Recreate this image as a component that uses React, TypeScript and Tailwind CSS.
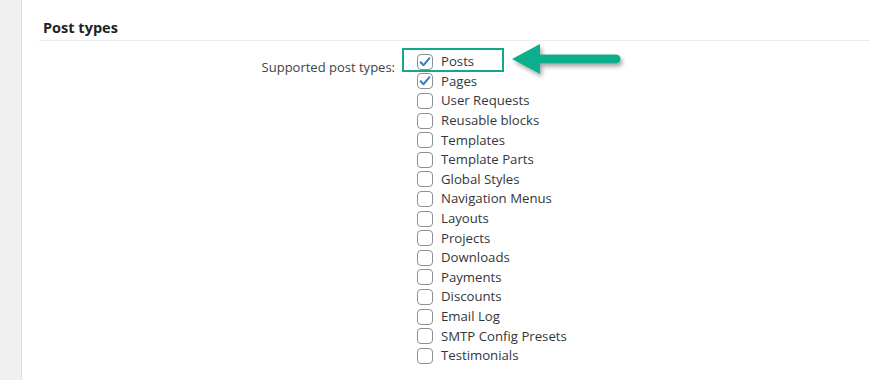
import React from "react";

const items: { label: string; checked: boolean }[] = [
  { label: "Posts", checked: true },
  { label: "Pages", checked: true },
  { label: "User Requests", checked: false },
  { label: "Reusable blocks", checked: false },
  { label: "Templates", checked: false },
  { label: "Template Parts", checked: false },
  { label: "Global Styles", checked: false },
  { label: "Navigation Menus", checked: false },
  { label: "Layouts", checked: false },
  { label: "Projects", checked: false },
  { label: "Downloads", checked: false },
  { label: "Payments", checked: false },
  { label: "Discounts", checked: false },
  { label: "Email Log", checked: false },
  { label: "SMTP Config Presets", checked: false },
  { label: "Testimonials", checked: false },
];

function Box({ checked }: { checked: boolean }) {
  return (
    <span className="flex h-[16px] w-[16px] shrink-0 items-center justify-center rounded-[4px] border border-[#8c8f94] bg-white">
      {checked && (
        <svg width="14" height="14" viewBox="0 0 14 14">
          <path d="M2.6 7.2 L5.6 10.2 L11.4 3.2" fill="none" stroke="#2f7fc1" strokeWidth="2" strokeLinecap="round" strokeLinejoin="round" />
        </svg>
      )}
    </span>
  );
}

export default function App() {
  return (
    <div
      className="relative flex h-[380px] w-[870px] overflow-hidden bg-white"
      style={{ fontFamily: '"Open Sans", "Noto Sans", sans-serif' }}
    >
      <div className="h-full w-[22px] shrink-0 border-r border-[#dcdcde] bg-[#f0f0f1]" />
      <div className="flex-1 pl-[17px]">
        <div className="border-b border-[#ebebeb] pb-[3px] pt-[18px] pl-[4px]">
          <h2 className="text-[14.5px] font-bold leading-[19px] text-[#1d2327]">Post types</h2>
        </div>
        <div className="mt-[11px] flex">
          <div className="w-[357px] shrink-0 pt-[5px] pr-[1px] text-right text-[13px] leading-[20px] text-[#3c434a]">
            Supported post types:
          </div>
          <div className="ml-[21px] flex flex-col">
            {items.map((it) => (
              <div key={it.label} className="flex h-[19.6px] items-center gap-[8px]">
                <Box checked={it.checked} />
                <span className="text-[13.2px] leading-[19px] text-[#32373c]">{it.label}</span>
              </div>
            ))}
          </div>
        </div>
      </div>
      <div className="absolute left-[402px] top-[48px] h-[24px] w-[102px] border-[2.5px] border-[#13a88a]" />
      <svg className="absolute left-[505px] top-[38px]" width="130" height="44" viewBox="0 0 130 44">
        <defs>
          <filter id="sh" x="-20%" y="-50%" width="140%" height="200%">
            <feDropShadow dx="2" dy="3" stdDeviation="2" floodColor="#000" floodOpacity="0.35" />
          </filter>
        </defs>
        <g filter="url(#sh)">
          <path d="M7 21 L35 6 L35 16.5 L111 16.5 A4.5 4.5 0 0 1 111 25.5 L35 25.5 L35 36 Z" fill="#10ae8c" />
        </g>
      </svg>
    </div>
  );
}
